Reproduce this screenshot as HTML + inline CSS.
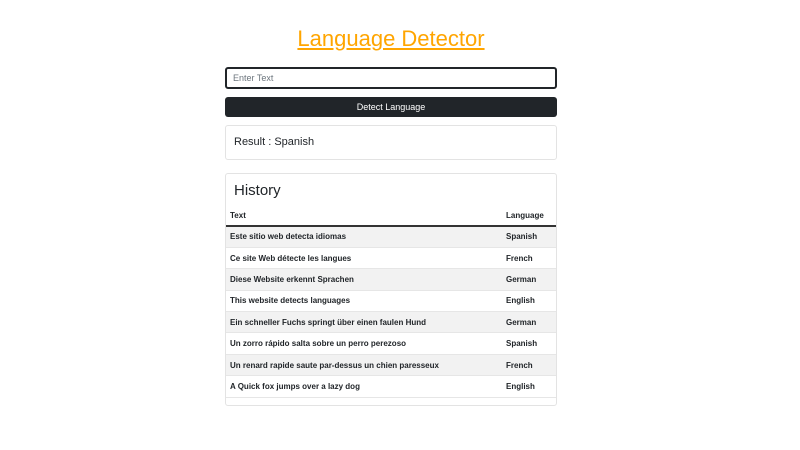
<!DOCTYPE html>
<html><head><style>
body{margin:0;background:#fff;font-family:"Liberation Sans",sans-serif;color:#212529;}
.w{position:absolute;left:225px;width:332px;}
h1{position:absolute;left:0;width:782px;top:24px;margin:0;text-align:center;font-size:22px;font-weight:normal;color:#ffa500;text-decoration:underline;line-height:30px;}
.inp{top:67px;height:18px;border:2px solid #212529;border-radius:3px;width:328px;font-size:9px;color:#6c757d;line-height:18px;text-indent:6px;}
.btn{top:97px;height:20px;background:#212529;border-radius:3px;color:#fff;font-size:9px;text-align:center;line-height:20px;}
.card{border:1px solid #e3e3e3;border-radius:3px;width:330px;}
.res{top:125px;height:33px;font-size:11px;line-height:32px;text-indent:8px;}
.his{top:173px;height:231px;}
.his h2{margin:0;font-size:15px;font-weight:normal;position:absolute;left:8px;top:8px;}
table{position:absolute;top:32px;left:0;width:330px;border-collapse:collapse;font-size:8px;font-weight:bold;}
td,th{height:20.4px;padding:0 4px;text-align:left;border-bottom:1px solid #e6e6e6;box-sizing:border-box;}
td{height:21.4px;}
th{height:20px;border-bottom:2px solid #333;}
tr:nth-child(even) td{background:#f2f2f2;}
td:last-child,th:last-child{width:54px;}
</style></head><body>
<h1>Language Detector</h1>
<div class="w inp">Enter Text</div>
<div class="w btn">Detect Language</div>
<div class="w card res">Result : Spanish</div>
<div class="w card his"><h2>History</h2>
<table>
<tr><th>Text</th><th>Language</th></tr>
<tr><td>Este sitio web detecta idiomas</td><td>Spanish</td></tr>
<tr><td>Ce site Web détecte les langues</td><td>French</td></tr>
<tr><td>Diese Website erkennt Sprachen</td><td>German</td></tr>
<tr><td>This website detects languages</td><td>English</td></tr>
<tr><td>Ein schneller Fuchs springt über einen faulen Hund</td><td>German</td></tr>
<tr><td>Un zorro rápido salta sobre un perro perezoso</td><td>Spanish</td></tr>
<tr><td>Un renard rapide saute par-dessus un chien paresseux</td><td>French</td></tr>
<tr><td>A Quick fox jumps over a lazy dog</td><td>English</td></tr>
</table></div>
</body></html>
